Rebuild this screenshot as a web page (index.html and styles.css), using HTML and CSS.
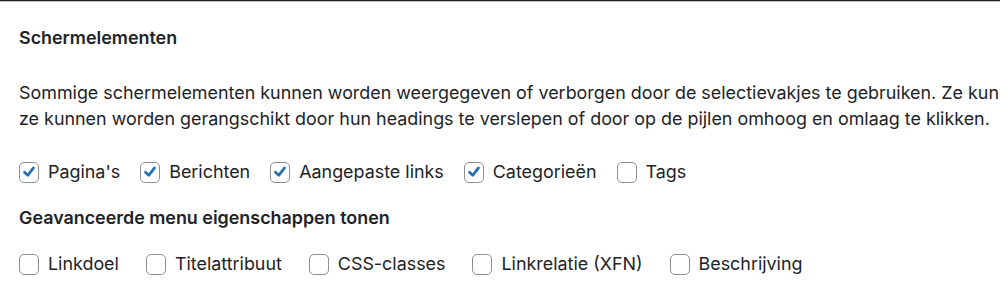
FILE: index.html
```html
<!DOCTYPE html>
<html lang="nl">
<head>
<meta charset="utf-8">
<title>Schermelementen</title>
<link rel="stylesheet" href="styles.css">
</head>
<body>
<div class="panel">
  <fieldset class="metabox-prefs">
    <legend class="heading">Schermelementen</legend>
    <p class="desc">Sommige schermelementen kunnen worden weergegeven of verborgen door de selectievakjes te gebruiken. Ze kunnen worden uitgevouwen en ingeklapt door op de headings te klikken, en<br>ze kunnen worden gerangschikt door hun headings te verslepen of door op de pijlen omhoog en omlaag te klikken.</p>
    <div class="options">
      <label class="opt"><span class="box checked"><svg viewBox="0 0 20 20"><path d="M5 10.2 L8.6 13.8 L15 5.4" /></svg></span>Pagina's</label>
      <label class="opt"><span class="box checked"><svg viewBox="0 0 20 20"><path d="M5 10.2 L8.6 13.8 L15 5.4" /></svg></span>Berichten</label>
      <label class="opt"><span class="box checked"><svg viewBox="0 0 20 20"><path d="M5 10.2 L8.6 13.8 L15 5.4" /></svg></span>Aangepaste links</label>
      <label class="opt"><span class="box checked"><svg viewBox="0 0 20 20"><path d="M5 10.2 L8.6 13.8 L15 5.4" /></svg></span>Categorieën</label>
      <label class="opt"><span class="box"></span>Tags</label>
    </div>
  </fieldset>
  <fieldset class="metabox-prefs second">
    <legend class="heading">Geavanceerde menu eigenschappen tonen</legend>
    <div class="options">
      <label class="opt"><span class="box"></span>Linkdoel</label>
      <label class="opt"><span class="box"></span>Titelattribuut</label>
      <label class="opt"><span class="box"></span>CSS-classes</label>
      <label class="opt"><span class="box"></span>Linkrelatie (XFN)</label>
      <label class="opt"><span class="box"></span>Beschrijving</label>
    </div>
  </fieldset>
</div>
</body>
</html>
```
FILE: styles.css
```css
html, body {
  margin: 0;
  padding: 0;
  background: #fff;
  overflow: hidden;
}
body {
  font-family: Inter, "Liberation Sans", sans-serif;
  color: #1d2327;
  font-size: 17.9px;
}
.panel {
  border-top: 1px solid #1d2327;
  box-shadow: inset 0 1px 0 #c3c4c7;
  padding: 24px 19px 0;
  width: 1600px;
}
.metabox-prefs {
  border: 0;
  margin: 0;
  padding: 0;
  min-width: 0;
}
.heading {
  padding: 0;
  font-weight: 600;
  line-height: 26px;
}
.desc {
  margin: 29px 0 0;
  line-height: 26px;
  white-space: nowrap;
}
.options {
  display: flex;
  gap: 20px;
  margin-top: 27px;
}
.second {
  margin-top: 20px;
}
.second .options {
  margin-top: 20px;
  gap: 27px;
}
.opt {
  display: flex;
  align-items: center;
  gap: 9px;
  line-height: 26px;
  white-space: nowrap;
}
.box {
  box-sizing: border-box;
  width: 20px;
  height: 21px;
  border: 1px solid #8c8f94;
  border-radius: 5px;
  background: #fff;
  display: flex;
  align-items: center;
  justify-content: center;
}
.box svg {
  width: 20px;
  height: 20px;
  fill: none;
  stroke: #2271b1;
  stroke-width: 3;
  stroke-linecap: round;
  stroke-linejoin: round;
}
```
